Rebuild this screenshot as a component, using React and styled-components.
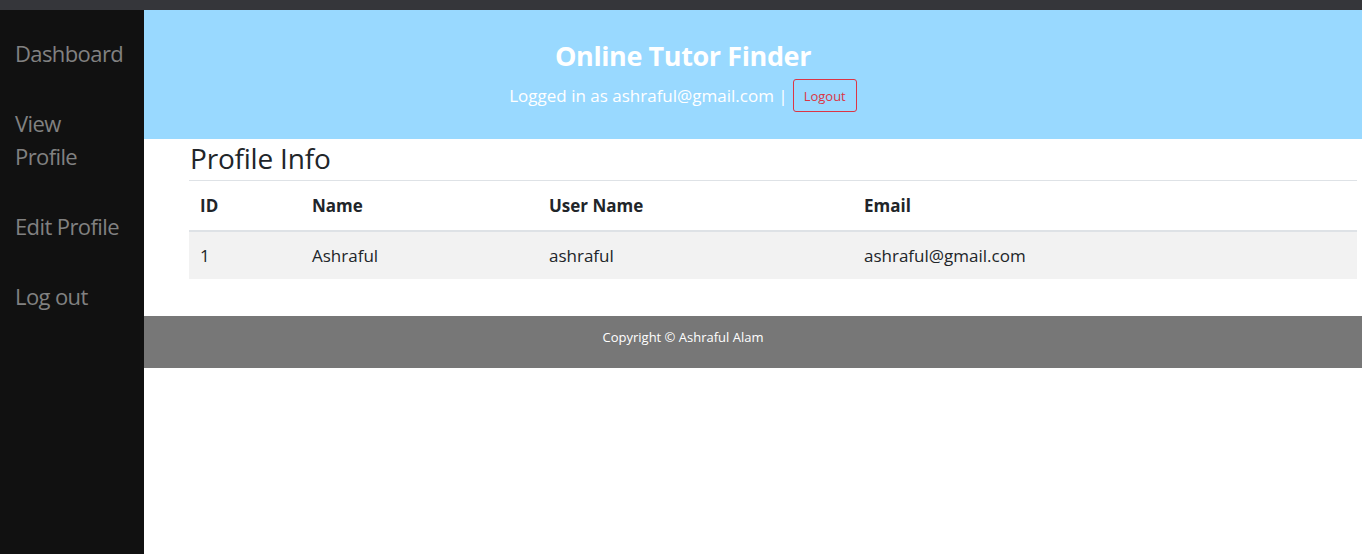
import React from "react"
import styled, { createGlobalStyle } from "styled-components"

const GlobalStyle = createGlobalStyle`
  html, body {
    margin: 0;
    padding: 0;
    height: 100%;
    background: #fff;
    font-family: "Open Sans", "Noto Sans", sans-serif;
    color: #212529;
  }
  #root {
    height: 100%;
  }
`

const Page = styled.div`
  display: flex;
  flex-direction: column;
  height: 554px;
`

const TopStrip = styled.div`
  height: 10px;
  background-color: #35363a;
  flex-shrink: 0;
`

const Layout = styled.div`
  display: flex;
  flex: 1;
`

const SideNav = styled.nav`
  width: 144px;
  flex-shrink: 0;
  background-color: #111;
  padding-top: 9px;
  box-sizing: border-box;
  display: flex;
  flex-direction: column;
`

const SideLink = styled.a`
  display: block;
  padding: 18px 15px 19px;
  font-size: 22px;
  line-height: 33px;
  color: #818181;
  text-decoration: none;
  letter-spacing: -0.6px;
`

const Main = styled.main`
  flex: 1;
  display: flex;
  flex-direction: column;
`

const Header = styled.header`
  background-color: #99d9ff;
  height: 129px;
  padding: 28px 140px 0 0;
  box-sizing: border-box;
  text-align: center;
  color: #fff;
`

const Title = styled.h1`
  margin: 0;
  font-size: 27px;
  line-height: 36px;
  font-weight: 700;
  letter-spacing: -0.4px;
`

const LoginLine = styled.div`
  margin-top: 5px;
  display: flex;
  align-items: center;
  justify-content: center;
  font-size: 17px;
  gap: 5px;
`

const LogoutButton = styled.button`
  font-family: inherit;
  font-size: 13px;
  color: #dc3545;
  background: transparent;
  border: 1px solid #dc3545;
  border-radius: 3px;
  padding: 0 10px;
  height: 33px;
  cursor: pointer;
`

const Content = styled.section`
  padding: 0 5px 37px 45px;
`

const SectionTitle = styled.h2`
  margin: 0;
  padding: 3px 0 6px 1px;
  font-size: 28px;
  line-height: 32px;
  font-weight: 500;
  color: #212529;
  border-bottom: 1px solid #dee2e6;
  letter-spacing: -0.2px;
`

const Table = styled.table`
  width: 100%;
  border-collapse: collapse;
  table-layout: fixed;
  font-size: 17px;
`

const HeadCell = styled.th`
  text-align: left;
  font-weight: 700;
  padding: 0 11px;
  height: 49px;
  border-bottom: 2px solid #dee2e6;
  width: ${(p) => p.$w || "auto"};
`

const BodyRow = styled.tr`
  background-color: #f2f2f2;
`

const Cell = styled.td`
  padding: 0 11px;
  height: 47px;
`

const Footer = styled.footer`
  background-color: #777;
  height: 52px;
  padding-right: 140px;
  display: flex;
  align-items: center;
  justify-content: center;
  color: #fff;
  font-size: 13px;
  padding-bottom: 11px;
  box-sizing: border-box;
`

export default function App() {
  return (
    <>
      <GlobalStyle />
      <Page>
        <TopStrip />
        <Layout>
          <SideNav>
            <SideLink href="#">Dashboard</SideLink>
            <SideLink href="#">
              View
              <br />
              Profile
            </SideLink>
            <SideLink href="#">Edit Profile</SideLink>
            <SideLink href="#">Log out</SideLink>
          </SideNav>
          <Main>
            <Header>
              <Title>Online Tutor Finder</Title>
              <LoginLine>
                <span>Logged in as ashraful@gmail.com |</span>
                <LogoutButton>Logout</LogoutButton>
              </LoginLine>
            </Header>
            <Content>
              <SectionTitle>Profile Info</SectionTitle>
              <Table>
                <thead>
                  <tr>
                    <HeadCell $w="90px">ID</HeadCell>
                    <HeadCell $w="215px">Name</HeadCell>
                    <HeadCell $w="293px">User Name</HeadCell>
                    <HeadCell>Email</HeadCell>
                  </tr>
                </thead>
                <tbody>
                  <BodyRow>
                    <Cell>1</Cell>
                    <Cell>Ashraful</Cell>
                    <Cell>ashraful</Cell>
                    <Cell>ashraful@gmail.com</Cell>
                  </BodyRow>
                </tbody>
              </Table>
            </Content>
            <Footer>Copyright © Ashraful Alam</Footer>
          </Main>
        </Layout>
      </Page>
    </>
  )
}
